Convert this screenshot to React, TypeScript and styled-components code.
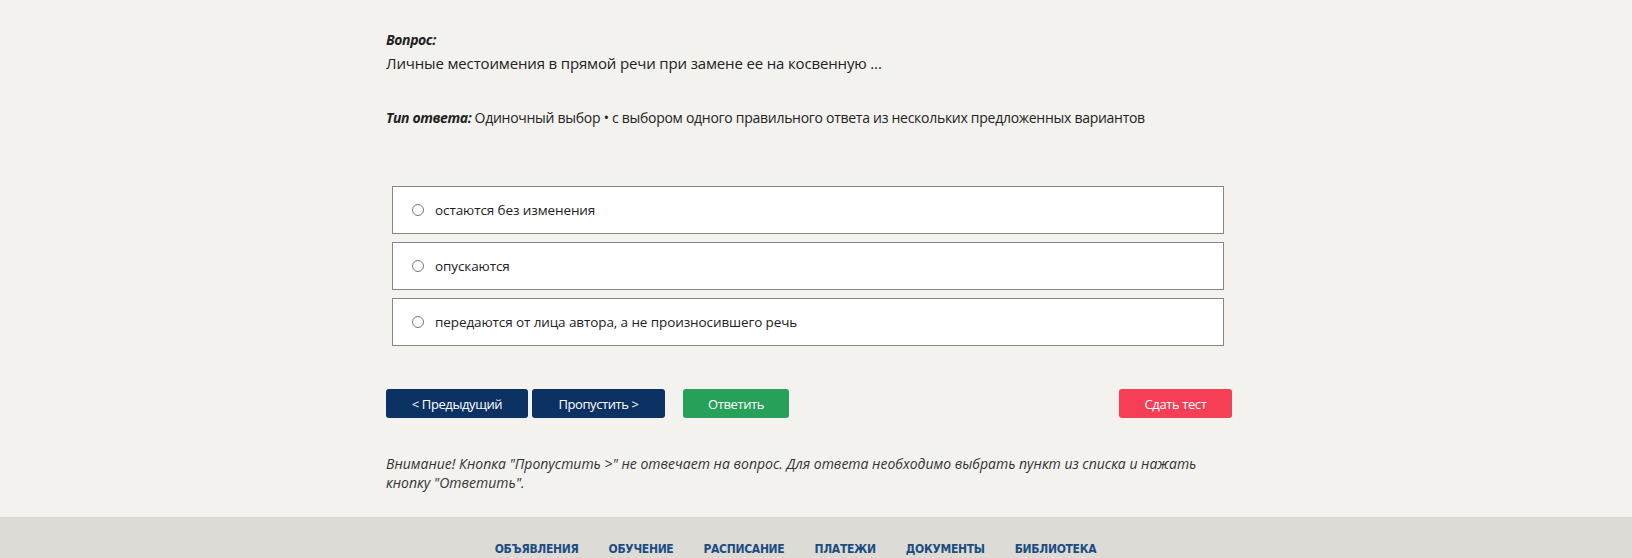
import { styled, createGlobalStyle } from "styled-components";

const GlobalStyle = createGlobalStyle`
  html, body {
    margin: 0;
    padding: 0;
    background-color: #f3f2ee;
  }
  body {
    font-family: "Open Sans", "Noto Sans", "DejaVu Sans", sans-serif;
    color: #222222;
  }
`;

const colors = {
  page: "#f3f2ee",
  footer: "#dcdbd6",
  navy: "#0c3163",
  green: "#27a05a",
  red: "#f63f57",
  border: "#858585",
  link: "#1d4d80",
};

const answers = [
  "остаются без изменения",
  "опускаются",
  "передаются от лица автора, а не произносившего речь",
];

const navItems = [
  "ОБЪЯВЛЕНИЯ",
  "ОБУЧЕНИЕ",
  "РАСПИСАНИЕ",
  "ПЛАТЕЖИ",
  "ДОКУМЕНТЫ",
  "БИБЛИОТЕКА",
];

const App = () => {
  return (
    <PageWrapper>
      <GlobalStyle />
      <Content>
        <Label>Вопрос:</Label>
        <QuestionText>
          Личные местоимения в прямой речи при замене ее на косвенную ...
        </QuestionText>
        <AnswerType>
          <Label as="span">Тип ответа:</Label> Одиночный выбор • с выбором
          одного правильного ответа из нескольких предложенных вариантов
        </AnswerType>

        <OptionList>
          {answers.map((a) => (
            <Option key={a}>
              <Radio />
              <span>{a}</span>
            </Option>
          ))}
        </OptionList>

        <ButtonRow>
          <Button $bg={colors.navy} $width={142}>
            &lt; Предыдущий
          </Button>
          <Button $bg={colors.navy} $width={133}>
            Пропустить &gt;
          </Button>
          <Button $bg={colors.green} $width={106} $gap={18}>
            Ответить
          </Button>
          <Spacer />
          <Button $bg={colors.red} $width={113}>
            Сдать тест
          </Button>
        </ButtonRow>

        <Warning>
          Внимание! Кнопка "Пропустить &gt;" не отвечает на вопрос. Для ответа
          необходимо выбрать пункт из списка и нажать
          <br />
          кнопку "Ответить".
        </Warning>
      </Content>

      <Footer>
        <Nav>
          {navItems.map((n) => (
            <NavLink key={n}>{n}</NavLink>
          ))}
        </Nav>
      </Footer>
    </PageWrapper>
  );
};

export default App;

const PageWrapper = styled.div`
  display: flex;
  flex-direction: column;
  min-height: 558px;
  background-color: ${colors.page};
`;

const Content = styled.div`
  width: 846px;
  margin-left: calc(50% - 430px);
  padding-top: 30px;
  display: flex;
  flex-direction: column;
`;

const Label = styled.div`
  font-weight: 700;
  font-style: italic;
  font-size: 14px;
  line-height: 20px;
  letter-spacing: -0.4px;
  color: #222222;
`;

const QuestionText = styled.div`
  font-size: 15px;
  line-height: 22px;
  margin-top: 2px;
  color: #222222;
  letter-spacing: -0.15px;
`;

const AnswerType = styled.div`
  margin-top: 34px;
  font-size: 14px;
  line-height: 20px;
  color: #222222;
  letter-spacing: -0.28px;
`;

const OptionList = styled.div`
  margin-top: 58px;
  margin-left: 6px;
  width: 832px;
  display: flex;
  flex-direction: column;
  gap: 8px;
`;

const Option = styled.label`
  display: flex;
  align-items: center;
  gap: 11px;
  height: 48px;
  box-sizing: border-box;
  padding-left: 19px;
  background-color: #ffffff;
  border: 1px solid ${colors.border};
  font-size: 13.5px;
  color: #222222;
  letter-spacing: -0.1px;
  cursor: pointer;
`;

const Radio = styled.span`
  width: 10px;
  height: 10px;
  border-radius: 50%;
  border: 1px solid #777777;
  background: #ffffff;
  flex-shrink: 0;
`;

const ButtonRow = styled.div`
  margin-top: 43px;
  display: flex;
  align-items: center;
  gap: 4px;
`;

const Button = styled.button<{ $bg: string; $width: number; $gap?: number }>`
  width: ${(p) => p.$width}px;
  height: 29px;
  margin-left: ${(p) => (p.$gap ? p.$gap - 4 : 0)}px;
  border: none;
  border-radius: 3px;
  background-color: ${(p) => p.$bg};
  color: #ffffff;
  font-family: "Open Sans", "Noto Sans", sans-serif;
  font-size: 13px;
  letter-spacing: -0.4px;
  cursor: pointer;
  padding: 0;
`;

const Spacer = styled.div`
  flex: 1;
`;

const Warning = styled.div`
  margin-top: 36px;
  font-style: italic;
  font-size: 14px;
  line-height: 19px;
  color: #333333;
  letter-spacing: 0;
  white-space: nowrap;
`;

const Footer = styled.div`
  margin-top: 25px;
  background-color: ${colors.footer};
  flex: 1;
  padding-top: 24px;
`;

const Nav = styled.nav`
  display: flex;
  justify-content: center;
  gap: 30px;
  padding-right: 41px;
`;

const NavLink = styled.a`
  font-family: "Liberation Sans Narrow", "DejaVu Sans Condensed", "Roboto", sans-serif;
  font-stretch: condensed;
  font-weight: 700;
  font-size: 12px;
  line-height: 16px;
  letter-spacing: -0.3px;
  color: ${colors.link};
  text-decoration: none;
  cursor: pointer;
`;
